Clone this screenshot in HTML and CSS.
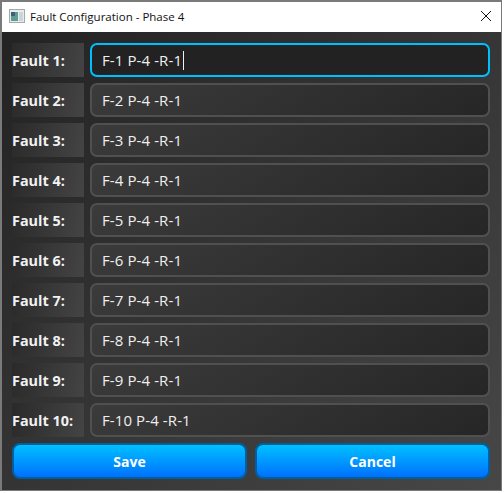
FILE: index.html
```html
<!DOCTYPE html>
<html lang="en">
  <head>
    <meta charset="UTF-8" />
    <title>Fault Configuration - Phase 4</title>
    <link rel="stylesheet" href="styles.css">
  </head>
  <body>
    <div class="window">
      <div class="titlebar">
        <svg class="app-icon" width="16" height="14" viewBox="0 0 16 14">
          <rect x="0.5" y="0.5" width="15" height="13" fill="#e8ecec" stroke="#a8a8a8" />
          <rect x="2" y="3" width="7" height="9" fill="#5f9a94" />
          <rect x="2" y="3" width="4" height="4" fill="#3d5f78" />
          <rect x="10" y="3" width="4" height="9" fill="#c9d6d6" />
        </svg>
        <span class="title">Fault Configuration - Phase 4</span>
        <svg class="close" width="12" height="12" viewBox="0 0 12 12">
          <path d="M1 1 L11 11 M11 1 L1 11" stroke="#111" stroke-width="1" fill="none" />
        </svg>
      </div>
      <div class="content">
        <div class="row"><label class="name">Fault 1:</label><div class="field focus">F-1 P-4 -R-1<span class="caret"></span></div></div>
        <div class="row"><label class="name">Fault 2:</label><div class="field">F-2 P-4 -R-1</div></div>
        <div class="row"><label class="name">Fault 3:</label><div class="field">F-3 P-4 -R-1</div></div>
        <div class="row"><label class="name">Fault 4:</label><div class="field">F-4 P-4 -R-1</div></div>
        <div class="row"><label class="name">Fault 5:</label><div class="field">F-5 P-4 -R-1</div></div>
        <div class="row"><label class="name">Fault 6:</label><div class="field">F-6 P-4 -R-1</div></div>
        <div class="row"><label class="name">Fault 7:</label><div class="field">F-7 P-4 -R-1</div></div>
        <div class="row"><label class="name">Fault 8:</label><div class="field">F-8 P-4 -R-1</div></div>
        <div class="row"><label class="name">Fault 9:</label><div class="field">F-9 P-4 -R-1</div></div>
        <div class="row"><label class="name">Fault 10:</label><div class="field">F-10 P-4 -R-1</div></div>
        <div class="buttons">
          <button class="btn">Save</button>
          <button class="btn">Cancel</button>
        </div>
      </div>
    </div>
  </body>
</html>
```

FILE: styles.css
```css
* {
  margin: 0;
  padding: 0;
  box-sizing: border-box;
}
html,
body {
  background: #fff;
}
body {
  font-family: "Open Sans", "Noto Sans", sans-serif;
}
.window {
  width: 502px;
  height: 491px;
  border: 1px solid #7a7a7a;
  border-top-width: 2px;
  border-left-width: 2px;
  display: flex;
  flex-direction: column;
}
.titlebar {
  height: 30px;
  flex: none;
  background: #fff;
  display: flex;
  align-items: center;
  padding: 0 9px 2px 7px;
  color: #111;
  font-size: 11.5px;
}
.app-icon {
  margin-right: 5px;
}
.title {
  flex: 1;
}
.content {
  flex: 1;
  background: linear-gradient(135deg, #232323, #474747);
  padding: 11px 11px 0 10px;
  display: flex;
  flex-direction: column;
  gap: 6px;
}
.row {
  display: flex;
  gap: 6px;
  height: 34px;
}
.name {
  width: 72px;
  display: flex;
  align-items: center;
  color: #f2f2f2;
  font-size: 14.4px;
  font-weight: 700;
  white-space: nowrap;
  background: linear-gradient(100deg, #2a2a2a, #444);
}
.field {
  width: 400px;
  border: 2px solid #505050;
  border-radius: 7px;
  background: linear-gradient(150deg, #3b3b3b, #262626);
  color: #f0f0f0;
  font-size: 15px;
  letter-spacing: 0.1px;
  padding-left: 10px;
  display: flex;
  align-items: center;
}
.focus {
  border-color: #00bfff;
  background: #222;
}
.caret {
  width: 1px;
  height: 19px;
  background: #f0f0f0;
  margin-left: 1px;
}
.buttons {
  display: flex;
  gap: 8px;
}
.btn {
  flex: 1;
  height: 36px;
  border: 2px solid #00609f;
  border-radius: 8px;
  background: linear-gradient(#00c0ff, #0070ff);
  color: #fff;
  font-family: inherit;
  font-size: 14px;
  font-weight: 700;
}
```
